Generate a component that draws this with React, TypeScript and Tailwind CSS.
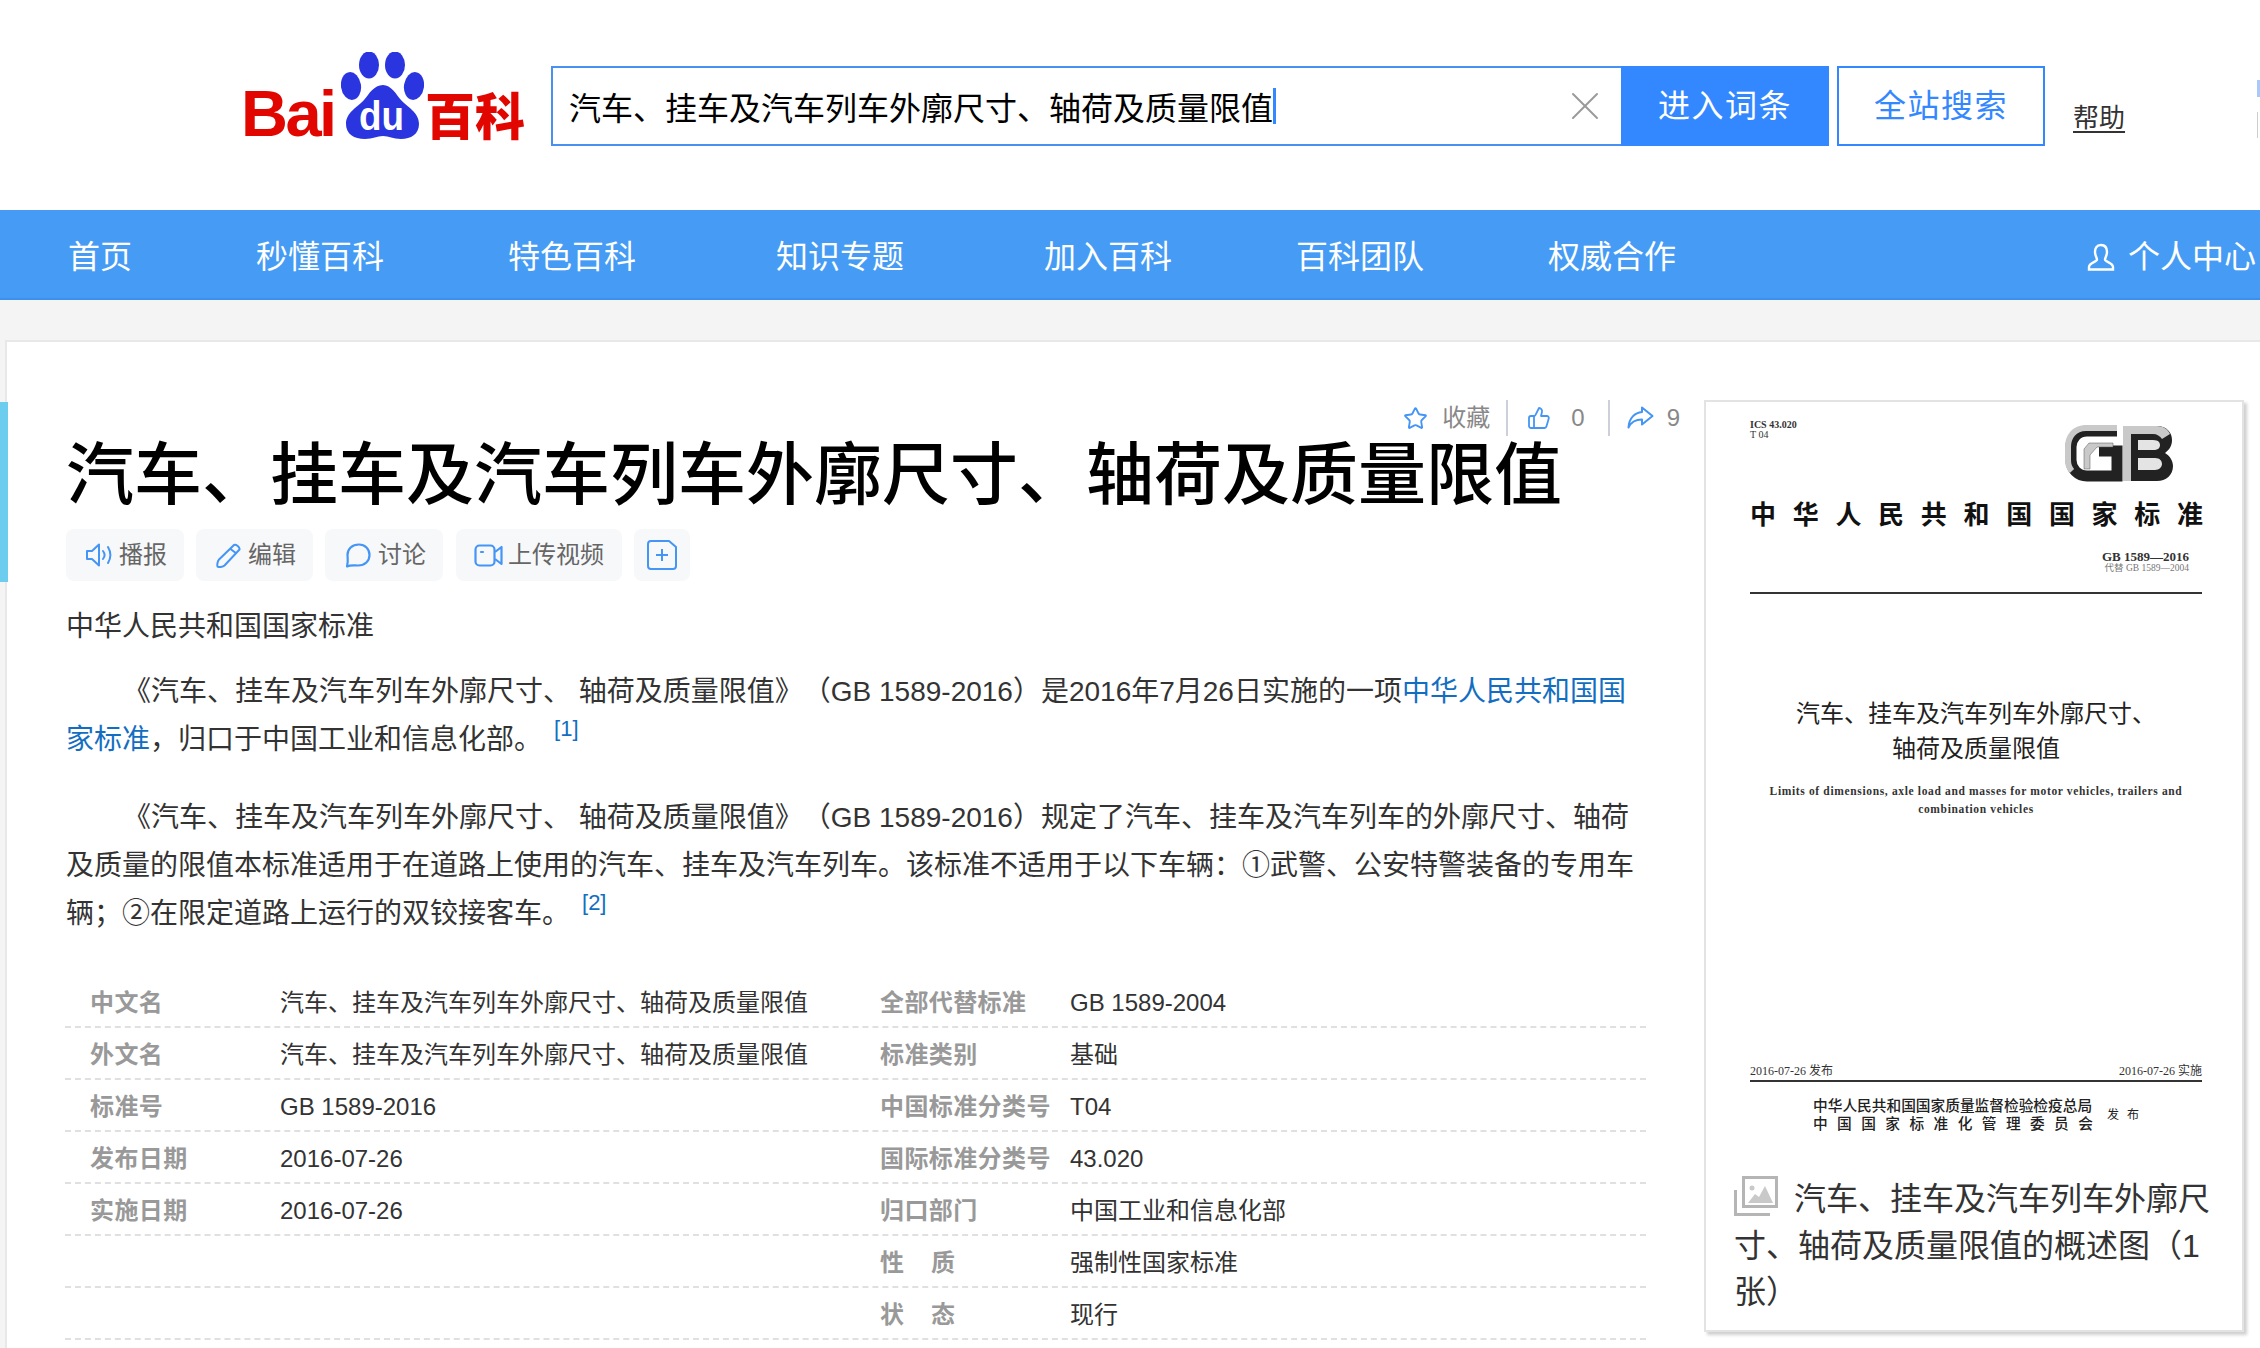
import { Star, ThumbsUp, X } from 'lucide-react'

const navItems = [
  { label: '首页', cls: '' },
  { label: '秒懂百科', cls: 'ml-[124px]' },
  { label: '特色百科', cls: 'ml-[124px]' },
  { label: '知识专题', cls: 'ml-[140px]' },
  { label: '加入百科', cls: 'ml-[140px]' },
  { label: '百科团队', cls: 'ml-[124px]' },
  { label: '权威合作', cls: 'ml-[124px]' },
]

const rows = [
  ['中文名', '汽车、挂车及汽车列车外廓尺寸、轴荷及质量限值', '全部代替标准', 'GB 1589-2004'],
  ['外文名', '汽车、挂车及汽车列车外廓尺寸、轴荷及质量限值', '标准类别', '基础'],
  ['标准号', 'GB 1589-2016', '中国标准分类号', 'T04'],
  ['发布日期', '2016-07-26', '国际标准分类号', '43.020'],
  ['实施日期', '2016-07-26', '归口部门', '中国工业和信息化部'],
  ['', '', '性　质', '强制性国家标准'],
  ['', '', '状　态', '现行'],
]

function Logo() {
  return (
    <div className="flex h-[88px] w-[282px] shrink-0 items-end">
      <span className="mb-[-6px] -ml-[2px] w-[99px] text-[65px] leading-[65px] font-bold tracking-[-2.5px] text-[#e10600]">Bai</span>
      <svg width="83" height="88" viewBox="0 0 83 88" className="ml-[2px] shrink-0">
        <ellipse cx="28" cy="13" rx="10" ry="13.5" fill="#2a35e0" />
        <ellipse cx="54" cy="13" rx="10" ry="13.5" fill="#2a35e0" />
        <ellipse cx="10" cy="34" rx="10" ry="14" fill="#2a35e0" transform="rotate(-8 10 34)" />
        <ellipse cx="73" cy="34" rx="10" ry="14" fill="#2a35e0" transform="rotate(8 73 34)" />
        <path d="M42 33C50 33 55 42 60 48C66 55 78 60 78 72C78 82 70 87 60 87C52 87 48 84 42 84C36 84 32 87 24 87C13 87 5 82 5 72C5 60 17 55 23 48C28 42 33 33 42 33Z" fill="#2a35e0" />
        <text x="18" y="78" fontSize="41" fontWeight="700" fill="#fff" textLength="45" lengthAdjust="spacingAndGlyphs">du</text>
      </svg>
      <span className="mb-[-3px] ml-[1px] text-[50px] leading-[50px] font-black whitespace-nowrap text-[#e10600]">百科</span>
    </div>
  )
}

function GbLogo() {
  return (
    <svg width="135" height="70" viewBox="0 0 135 70" className="shrink-0">
      <path d="M64 12H34C24 12 18 20 18 28V41C18 50 25 57 34 57H64V32H46" fill="none" stroke="#222" strokeWidth="11" />
      <path d="M64 9H33C21 9 15 18 15 28V41C15 46 16 49 19 52" fill="none" stroke="#c9c9c9" strokeWidth="6" />
      <path d="M36 24H60V28H44L37 36V50H31V30Z" fill="#c9c9c9" stroke="#555" strokeWidth="0.5" />
      <path d="M70 7H104C114 7 119 14 119 21C119 27 116 31 112 34C117 37 120 42 120 47C120 56 113 62 104 62H70Z" fill="#222" />
      <path d="M70 7H104C110 7 115 10 117 15L109 20C107 17 104 15 100 15H78V62H70Z" fill="#c9c9c9" />
      <path d="M85 21H100C106 21 107 24 107 26C107 29 105 31 100 31H85ZM85 39H102C107 39 109 42 109 45C109 48 106 51 102 51H85Z" fill="#e4e4e4" />
    </svg>
  )
}

function CoverImage() {
  return (
    <div className="flex h-[676px] flex-col pr-[40px] pl-[44px] font-['Liberation_Serif','Noto_Sans_CJK_SC',serif] text-[#111]">
      <div className="flex h-[94px] items-start justify-between pt-[18px] pr-[14px]">
        <div className="text-[10px] leading-[10px] font-bold text-[#333]">
          <div>ICS 43.020</div>
          <div className="font-normal">T 04</div>
        </div>
        <div className="mt-[-1px]"><GbLogo /></div>
      </div>
      <div className="font-['Noto_Sans_CJK_SC',serif] text-[26px] leading-[34px] font-bold tracking-[16.7px] whitespace-nowrap">中华人民共和国国家标准</div>
      <div className="mt-[20px] self-end pr-[13px] text-right text-[#333]">
        <div className="text-[13px] leading-[13px] font-bold">GB 1589—2016</div>
        <div className="text-[9.5px] leading-[11px] text-[#777]">代替 GB 1589—2004</div>
      </div>
      <div className="mt-[18px] h-[2px] bg-[#333]" />
      <div className="mt-[100px] text-center font-['Noto_Sans_CJK_SC',sans-serif] text-[24px] leading-[35px] text-[#222]">
        <div>汽车、挂车及汽车列车外廓尺寸、</div>
        <div>轴荷及质量限值</div>
      </div>
      <div className="mt-[18px] text-center text-[11.5px] leading-[18px] font-bold tracking-[0.65px] text-[#333]">
        <div>Limits of dimensions, axle load and masses for motor vehicles, trailers and</div>
        <div>combination vehicles</div>
      </div>
      <div className="mt-auto flex items-end justify-between text-[12px] leading-[14px] text-[#333]">
        <span>2016-07-26 发布</span>
        <span>2016-07-26 实施</span>
      </div>
    </div>
  )
}

function CoverFooter() {
  return (
    <div className="flex items-center pl-[107px] font-['Noto_Sans_CJK_SC',sans-serif] text-[#222]">
      <div className="w-[280px] font-medium">
        <div className="text-[14.7px] leading-[18px] whitespace-nowrap">中华人民共和国国家质量监督检验检疫总局</div>
        <div className="flex justify-between text-[14.7px] leading-[18px]">
          {'中国国家标准化管理委员会'.split('').map((c, i) => (
            <span key={i}>{c}</span>
          ))}
        </div>
      </div>
      <span className="ml-[14px] text-[12px] tracking-[8px]">发布</span>
    </div>
  )
}

function ImagesIcon() {
  return (
    <svg width="44" height="40" viewBox="0 0 44 40" className="mr-[16px] inline-block align-[-6px]">
      <path d="M1.500 14V38.500H36" fill="none" stroke="#b5b5b5" strokeWidth="3" />
      <rect x="9.500" y="1.500" width="33" height="29" fill="none" stroke="#b5b5b5" strokeWidth="3" />
      <circle cx="18" cy="12" r="2.500" fill="#c9c9c9" />
      <path d="M14 27L21 18L25 21L31 10L39 27Z" fill="#c9c9c9" />
    </svg>
  )
}

function ActionButton({ icon, text }: { icon: React.ReactNode; text: string }) {
  return (
    <div className="flex h-[52px] items-center rounded-[8px] bg-[#f7f8fa] pr-[17px] pl-[20px] text-[24px] text-[#666]">
      {icon}
      <span className="ml-[7px] leading-none">{text}</span>
    </div>
  )
}

export default function App() {
  return (
    <div className="relative h-[1348px] w-[2260px] overflow-hidden bg-[#f4f4f4] font-['Liberation_Sans','Noto_Sans_CJK_SC',sans-serif] text-[#333] [text-spacing-trim:space-all]">
      <div className="flex h-[210px] items-start bg-white pt-[52px] pl-[243px]">
        <Logo />
        <div className="mt-[14px] ml-[26px] flex h-[80px] shrink-0">
          <div className="flex w-[1070px] items-center border-2 border-r-0 border-[#4a90f0] pl-[16px]">
            <span className="inline-block pt-[5px] text-[32px] leading-none text-black">汽车、挂车及汽车列车外廓尺寸、轴荷及质量限值</span>
            <span className="h-[36px] w-[3px] bg-[#3388ff]" />
            <X className="mr-[12px] ml-auto text-[#9a9a9a]" size={48} strokeWidth={1} />
          </div>
          <div className="flex w-[208px] items-center justify-center bg-[#3388ff] text-[32px] tracking-[1.5px] text-white">进入词条</div>
          <div className="ml-[8px] flex w-[208px] items-center justify-center border-2 border-[#3388ff] text-[32px] tracking-[1.5px] text-[#3388ff]">全站搜索</div>
          <div className="mt-[36px] ml-[28px] text-[26px] leading-[32px] whitespace-nowrap text-[#333] underline underline-offset-4">帮助</div>
          <div className="mt-[14px] ml-[132px] w-[4px]">
            <div className="h-[17px] w-[4px] bg-[#a9c9fb]" />
            <div className="mt-[15px] h-[26px] w-[1px] bg-[#ccc]" />
          </div>
        </div>
      </div>

      <div className="flex h-[90px] items-center border-b-2 border-[#3d90ee] bg-[#469cf5] pt-[5px] pl-[68px] text-[32px] text-white">
        {navItems.map((n) => (
          <span key={n.label} className={n.cls}>{n.label}</span>
        ))}
        <svg width="28" height="28" viewBox="0 0 28 28" className="ml-auto" fill="none" stroke="#fff" strokeWidth="2.400">
          <path d="M14 2C9.500 2 8 5.500 8 9C8 12.500 10 15 10 16.500C10 19 2 19.500 2 24V26.500H26V24C26 19.500 18 19 18 16.500C18 15 20 12.500 20 9C20 5.500 18.500 2 14 2Z" />
        </svg>
        <span className="mr-[4px] ml-[13px] whitespace-nowrap">个人中心</span>
      </div>

      <div className="absolute top-[402px] left-0 z-10 h-[180px] w-[8px] bg-[#6ccdee]" />

      <div className="mt-[40px] ml-[5px] flex h-[1010px] border-t-2 border-l-2 border-[#e8e8e8] bg-white">
        <div className="ml-[60px] w-[1579px] shrink-0 pt-[58px]">
          <div className="flex h-[36px] items-center justify-end text-[24px] text-[#888]">
            <Star size={25} strokeWidth={1.8} className="text-[#4495f5]" />
            <span className="ml-[14px]">收藏</span>
            <span className="ml-[16px] h-[36px] w-[2px] bg-[#ccd0d8]" />
            <ThumbsUp size={24} strokeWidth={1.8} className="ml-[19px] text-[#4495f5]" />
            <span className="ml-[20px]">0</span>
            <span className="ml-[23px] h-[36px] w-[2px] bg-[#ccd0d8]" />
            <svg width="27" height="24" viewBox="0 0 27 24" fill="none" stroke="#4495f5" strokeWidth="2" strokeLinejoin="round" className="ml-[17px]">
              <path d="M15 1.500L25.500 10L15 18.500V13.500C9 13.500 4 16 1.500 21.500C2 12 8 6.500 15 6Z" />
            </svg>
            <span className="mr-[-34px] ml-[13px]">9</span>
          </div>

          <h1 className="mt-[-1px] -ml-[1px] text-[68px] leading-[80px] font-medium whitespace-nowrap text-black">汽车、挂车及汽车列车外廓尺寸、轴荷及质量限值</h1>

          <div className="mt-[14px] -ml-[1px] flex gap-[12px]">
            <ActionButton
              text="播报"
              icon={
                <svg width="26" height="24" viewBox="0 0 26 24" fill="none" stroke="#4495f5" strokeWidth="2">
                  <path d="M1 8H6L13 1.500V22.500L6 16H1Z" strokeLinejoin="round" />
                  <path d="M17 8C19 10.500 19 13.500 17 16M22 4C25 9 25 15 22 20" strokeLinecap="round" />
                </svg>
              }
            />
            <ActionButton
              text="编辑"
              icon={
                <svg width="25" height="25" viewBox="0 0 25 25" fill="none" stroke="#4495f5" strokeWidth="2" strokeLinejoin="round">
                  <path d="M18 2C20 1 24 4 23.500 6.500L8.500 22.500C7 24 2.500 24.500 1.500 23.500C1 22 1.500 18 3 16.500Z" />
                  <path d="M14.500 6L20.500 10.500" />
                </svg>
              }
            />
            <ActionButton
              text="讨论"
              icon={
                <svg width="26" height="25" viewBox="0 0 26 25" fill="none" stroke="#4495f5" strokeWidth="2.200">
                  <path d="M14 1.500C7 1.500 2.500 6 2.500 12C2.500 15 3.500 18 2 23.500C5 22 8 22.500 13 22.500C20 22.500 24.500 18 24.500 12C24.500 6 20 1.500 14 1.500Z" strokeLinejoin="round" />
                </svg>
              }
            />
            <div className="ml-[1px] flex h-[52px] items-center rounded-[8px] bg-[#f7f8fa] pr-[18px] pl-[18px] text-[24px] text-[#666]">
              <svg width="29" height="23" viewBox="0 0 29 23" fill="none" stroke="#4495f5" strokeWidth="2.200">
                <rect x="1.500" y="1.500" width="19" height="20" rx="4" />
                <path d="M21 8L27.500 3V20L21 15" strokeLinejoin="round" />
                <path d="M7 8H9" strokeLinecap="round" />
              </svg>
              <span className="ml-[5px] leading-none">上传视频</span>
            </div>
            <div className="flex h-[52px] w-[56px] items-center justify-center rounded-[8px] bg-[#f7f8fa]">
              <svg width="30" height="30" viewBox="0 0 30 30" fill="none" stroke="#4495f5" strokeWidth="2">
                <path d="M4 1H22L29 7V26C29 28 27.500 29 26 29H4C2.500 29 1 28 1 26V4C1 2 2.500 1 4 1Z" strokeLinejoin="round" />
                <path d="M15 9V21M9 15H21" />
              </svg>
            </div>
          </div>

          <div className="mt-[22px] -ml-[1px] text-[28px] leading-[48px]">中华人民共和国国家标准</div>

          <p className="mt-[17px] -ml-[1px] text-[28px] leading-[48px]">
            <span className="ml-[57px]" />《汽车、挂车及汽车列车外廓尺寸、 轴荷及质量限值》（GB 1589-2016）是2016年7月26日实施的一项
            <span className="text-[#136ec2]">中华人民共和国国家标准</span>，归口于中国工业和信息化部。
            <sup className="-top-[13px] ml-[12px] text-[22px] leading-none text-[#136ec2]">[1]</sup>
          </p>
          <p className="mt-[30px] -ml-[1px] text-[28px] leading-[48px]">
            <span className="ml-[57px]" />《汽车、挂车及汽车列车外廓尺寸、 轴荷及质量限值》（GB 1589-2016）规定了汽车、挂车及汽车列车的外廓尺寸、轴荷及质量的限值本标准适用于在道路上使用的汽车、挂车及汽车列车。该标准不适用于以下车辆：①武警、公安特警装备的专用车辆；②在限定道路上运行的双铰接客车。
            <sup className="-top-[13px] ml-[12px] text-[22px] leading-none text-[#136ec2]">[2]</sup>
          </p>

          <div className="mt-[38px] -ml-[2px]">
            {rows.map((r, i) => (
              <div key={i} className="flex h-[52px] items-center border-b-2 border-dashed border-[#e0e0e0] pt-[3px] text-[24px]">
                <div className="w-[215px] pl-[25px] font-bold tracking-[0.4px] text-[#999]">{r[0]}</div>
                <div className="w-[600px]">{r[1]}</div>
                <div className={r[2].includes('　') ? 'w-[190px] font-bold tracking-[1.5px] whitespace-nowrap text-[#999]' : 'w-[190px] font-bold tracking-[0.4px] whitespace-nowrap text-[#999]'}>{r[2]}</div>
                <div>{r[3]}</div>
              </div>
            ))}
          </div>
        </div>

        <div className="mt-[58px] ml-[58px] h-[932px] w-[540px] shrink-0 border-2 border-[#e3e3e3] bg-white shadow-[3px_3px_3px_#d0d0d0]">
          <CoverImage />
          <div className="mx-[44px] mt-[2px] mr-[40px] h-[2px] bg-[#333]" />
          <div className="mt-[14px]"><CoverFooter /></div>
          <div className="mt-[44px] pr-[24px] pl-[28px] text-[32px] leading-[46.500px] text-[#333]">
            <ImagesIcon />汽车、挂车及汽车列车外廓尺寸、轴荷及质量限值的概述图（1张）
          </div>
        </div>
      </div>
    </div>
  )
}
